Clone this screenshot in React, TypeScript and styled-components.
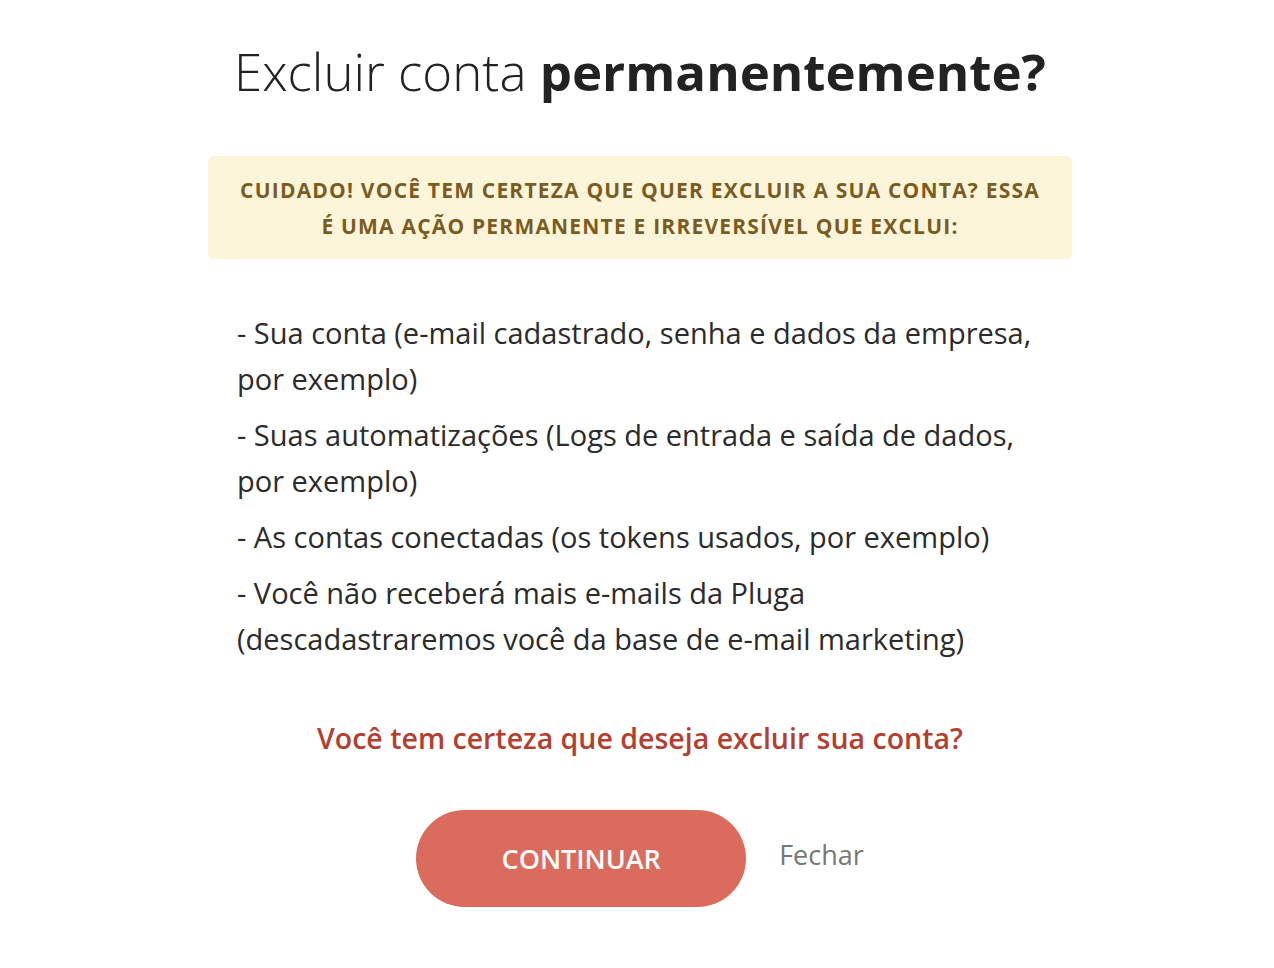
import React from "react";
import styled, { createGlobalStyle } from "styled-components";

const GlobalStyle = createGlobalStyle`
  html, body {
    margin: 0;
    padding: 0;
    background: #ffffff;
  }
  body {
    font-family: "Open Sans", Lato, sans-serif;
    color: #2b2b2b;
  }
`;

const items = [
  "- Sua conta (e-mail cadastrado, senha e dados da empresa, por exemplo)",
  "- Suas automatizações (Logs de entrada e saída de dados, por exemplo)",
  "- As contas conectadas (os tokens usados, por exemplo)",
  "- Você não receberá mais e-mails da Pluga (descadastraremos você da base de e-mail marketing)",
];

export default function App(): JSX.Element {
  return (
    <>
      <GlobalStyle />
      <Page>
        <Title>
          Excluir conta <strong>permanentemente?</strong>
        </Title>
        <Warning>
          Cuidado! Você tem certeza que quer excluir a sua conta? Essa é uma
          ação permanente e irreversível que exclui:
        </Warning>
        <List>
          {items.map((item) => (
            <Item key={item}>{item}</Item>
          ))}
        </List>
        <Question>Você tem certeza que deseja excluir sua conta?</Question>
        <Actions>
          <ContinueButton>Continuar</ContinueButton>
          <CloseLink>Fechar</CloseLink>
        </Actions>
      </Page>
    </>
  );
}

const Page = styled.div`
  width: 864px;
  margin-left: 208px;
  padding-top: 35px;
  display: flex;
  flex-direction: column;
`;

const Title = styled.h1`
  margin: 0;
  font-size: 51px;
  font-weight: 300;
  line-height: 72px;
  text-align: center;
  color: #222;

  strong {
    font-weight: 700;
  }
`;

const Warning = styled.div`
  margin-top: 49px;
  background: #fdf5da;
  border-radius: 6px;
  padding: 16px 30px 15px;
  text-align: center;
  text-transform: uppercase;
  font-size: 21px;
  font-weight: 700;
  line-height: 36px;
  letter-spacing: 1.2px;
  color: #7b5c1f;
`;

const List = styled.div`
  margin-top: 51px;
  padding: 0 22px 0 29px;
  display: flex;
  flex-direction: column;
  gap: 10px;
`;

const Item = styled.p`
  margin: 0;
  font-size: 29px;
  line-height: 46px;
  color: #2b2b2b;
`;

const Question = styled.p`
  margin: 56px 0 0;
  text-align: center;
  font-size: 28.5px;
  font-weight: 600;
  line-height: 40px;
  color: #b23f30;
`;

const Actions = styled.div`
  margin-top: 52px;
  display: flex;
  justify-content: center;
  align-items: center;
  gap: 33px;
`;

const ContinueButton = styled.button`
  width: 330px;
  height: 97px;
  border: none;
  border-radius: 49px;
  background: #db6b5c;
  color: #fff;
  font-family: inherit;
  font-size: 27px;
  font-weight: 600;
  text-transform: uppercase;
  cursor: pointer;
`;

const CloseLink = styled.span`
  font-size: 27px;
  color: #777;
  margin-top: -8px;
  cursor: pointer;
`;
